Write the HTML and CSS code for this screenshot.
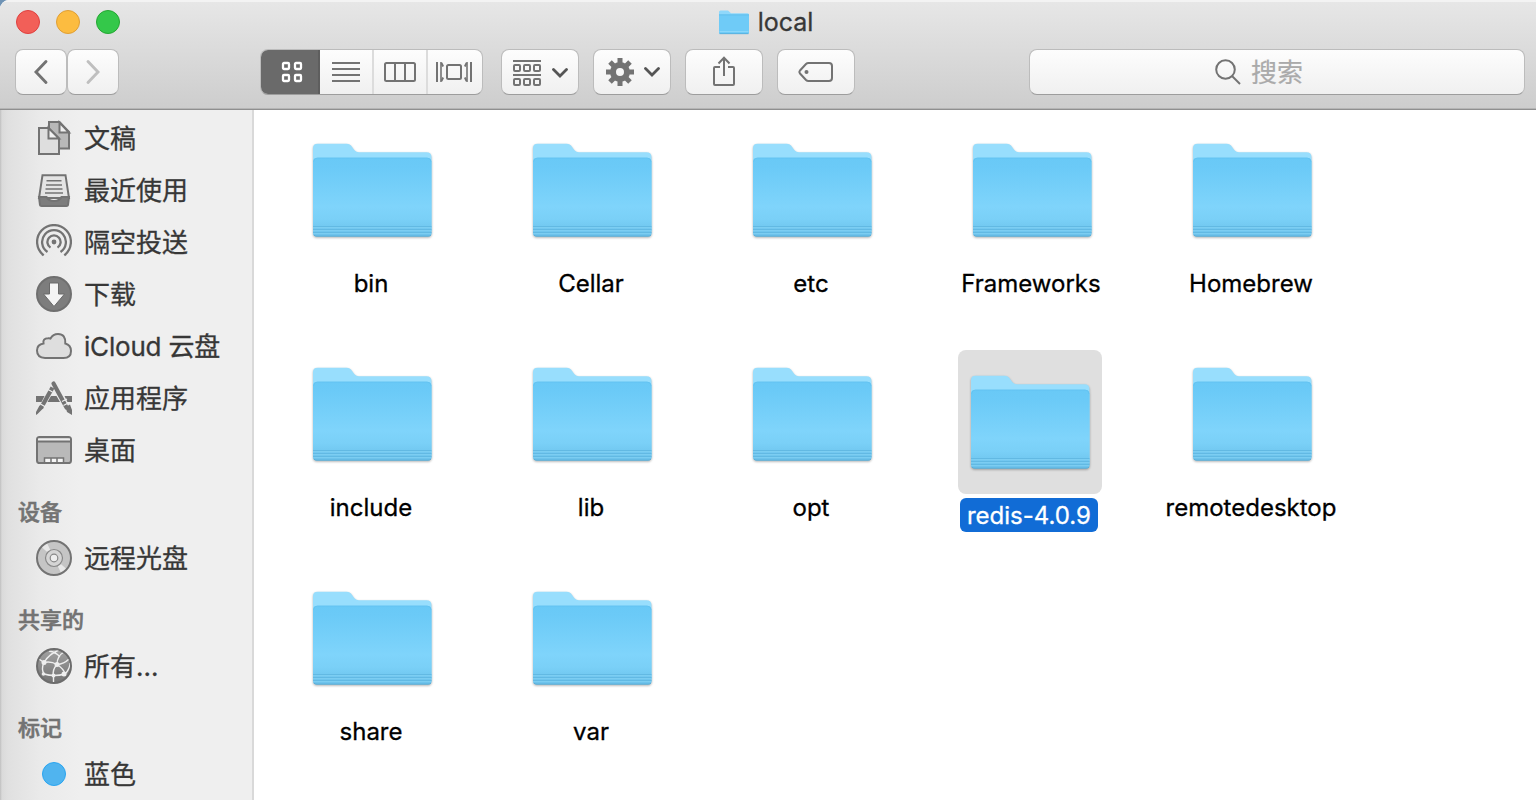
FILE: index.html
```
<!DOCTYPE html>
<html lang="zh-CN">
<head>
<meta charset="utf-8">
<title>local</title>
<link rel="stylesheet" href="styles.css">
</head>
<body>
<svg class="defs" width="0" height="0">
  <defs>
    <linearGradient id="front" x1="0" y1="0" x2="0" y2="1">
      <stop offset="0" stop-color="#69c9f6"/><stop offset=".12" stop-color="#6bcaf7"/><stop offset=".62" stop-color="#7fd4fb"/><stop offset=".78" stop-color="#7ad0f7"/><stop offset="1" stop-color="#68bfe9"/>
    </linearGradient>
    <linearGradient id="globe" x1="0" y1="0" x2="0" y2="1">
      <stop offset="0" stop-color="#a2a2a2"/><stop offset="1" stop-color="#747474"/>
    </linearGradient>
    <symbol id="folder" viewBox="0 0 119 95">
      <path d="M0 88V5Q0 .7 4.500 .7H34Q36.500 .7 38 2.600L41.500 7.200Q43.300 9.300 46 9.300H113.500Q118.500 9.300 118.500 14V88Z" fill="#98defd"/>
      <path d="M0 90V19Q0 14.700 4.500 14.700H114Q118.500 14.700 118.500 19V90Q118.500 93.500 115 93.500H3.500Q0 93.500 0 90Z" fill="url(#front)"/>
      <path d="M.5 19Q.5 15 4.500 15H114Q118 15 118 19" fill="none" stroke="#5fc0ee" stroke-opacity=".6"/>
      <path d="M0 83.500H118.500M0 86.500H118.500M0 89.500H118.500" stroke="#62b9e3" stroke-width="1"/>
      <path d="M0 84.700H118.500M0 87.700H118.500M0 90.700H118.500" stroke="#7fcff3" stroke-width="1"/>
      <path d="M1 92.200Q2 93.200 4 93.200H115Q117 93.200 118 92.200" fill="none" stroke="#57a9d2" stroke-width=".8"/>
    </symbol>
    <symbol id="chevron" viewBox="0 0 16 10"><path d="M1.500 1.500L8 8L14.500 1.500" fill="none" stroke="#555" stroke-width="2.800" stroke-linecap="round"/></symbol>
  </defs>
</svg>
<div class="window">
  <header class="chrome">
    <div class="titlebar">
      <div class="lights"><span class="light close"></span><span class="light minimize"></span><span class="light maximize"></span></div>
      <div class="title"><svg class="title-folder" viewBox="0 0 30 25"><path d="M0 22V2Q0 .5 1.500 .5H9L12 3.200H28.500Q30 3.200 30 5V22Z" fill="#8fd8fb"/><path d="M0 4.800H30V22.500Q30 24 28.500 24H1.500Q0 24 0 22.500Z" fill="#6fcbf7"/><path d="M0 4.800H30" stroke="#5abbe9" stroke-width=".8"/><path d="M.5 21.500H29.500" stroke="#8bd7fa"/><path d="M.5 23.700H29.500" stroke="#53aad6" stroke-width=".8"/></svg><span>local</span></div>
    </div>
    <div class="toolbar">
      <div class="nav">
        <button class="btn nav-btn"><svg width="16" height="26" viewBox="0 0 16 26"><path d="M13 2.500L3 13L13 23.500" fill="none" stroke="#737373" stroke-width="2.900" stroke-linecap="round"/></svg></button>
        <button class="btn nav-btn"><svg width="16" height="26" viewBox="0 0 16 26"><path d="M3 2.500L13 13L3 23.500" fill="none" stroke="#bfbfbf" stroke-width="2.900" stroke-linecap="round"/></svg></button>
      </div>
      <div class="btn segmented">
        <div class="segment active"><svg width="22" height="22" viewBox="0 0 22 22" fill="none" stroke="#fff" stroke-width="2.300"><rect x="2" y="2" width="6" height="6" rx="1"/><rect x="14" y="2" width="6" height="6" rx="1"/><rect x="2" y="14" width="6" height="6" rx="1"/><rect x="14" y="14" width="6" height="6" rx="1"/></svg></div>
        <div class="segment"><svg width="28" height="20" viewBox="0 0 28 20"><path d="M0 1H28M0 7H28M0 13H28M0 19H28" stroke="#737373" stroke-width="2"/></svg></div>
        <div class="segment"><svg width="32" height="20" viewBox="0 0 32 20" fill="none" stroke="#737373" stroke-width="2"><rect x="1" y="1" width="30" height="18" rx="1.500"/><path d="M11 1V19M21 1V19"/></svg></div>
        <div class="segment last"><svg width="36" height="20" viewBox="0 0 36 20" fill="none" stroke="#737373" stroke-width="2"><rect x="11" y="3" width="14" height="14" rx="1.500"/><path d="M1 0V20M35 0V20"/><path d="M5 0V20M31 0V20" stroke-width="1.600"/><path d="M5.500 1L7.200 4.500M5.500 19L7.200 15.500M30.500 1L28.800 4.500M30.500 19L28.800 15.500" stroke-width="1.800"/></svg></div>
      </div>
      <div class="actions">
        <button class="btn action menu"><svg width="28" height="26" viewBox="0 0 28 26" fill="none" stroke="#737373" stroke-width="2"><path d="M0 1H28M0 15H28"/><rect x="1" y="5" width="6" height="6" rx="1"/><rect x="11" y="5" width="6" height="6" rx="1"/><rect x="21" y="5" width="6" height="6" rx="1"/><rect x="1" y="19" width="6" height="6" rx="1"/><rect x="11" y="19" width="6" height="6" rx="1"/><rect x="21" y="19" width="6" height="6" rx="1"/></svg><svg class="chevron"><use href="#chevron"/></svg></button>
        <button class="btn action menu gear"><svg width="28" height="28" viewBox="-14 -14 28 28"><circle r="7" fill="none" stroke="#737373" stroke-width="6"/><g stroke="#737373" stroke-width="5"><path d="M0 -9V-14M0 9V14M-9 0H-14M9 0H14"/><path d="M-6.500 -6.500L-10 -10M6.500 6.500L10 10M-6.500 6.500L-10 10M6.500 -6.500L10 -10"/></g></svg><svg class="chevron"><use href="#chevron"/></svg></button>
        <button class="btn action share"><svg width="24" height="30" viewBox="0 0 24 30" fill="none" stroke="#737373" stroke-width="2"><path d="M8 11H3Q2 11 2 12V28Q2 29 3 29H21Q22 29 22 28V12Q22 11 21 11H16M12 20V2M6.500 7.500L12 1.800L17.500 7.500"/></svg></button>
        <button class="btn action"><svg width="36" height="22" viewBox="0 0 36 22"><path d="M10.500 2H31Q34 2 34 5V17Q34 20 31 20H10.500Q9 20 8 19L2 12.500Q.8 11 2 9.500L8 3Q9 2 10.500 2Z" fill="none" stroke="#737373" stroke-width="2"/><circle cx="8.500" cy="11" r="2" fill="#737373"/></svg></button>
      </div>
      <div class="btn search"><svg width="26" height="26" viewBox="0 0 26 26" fill="none" stroke="#737373" stroke-width="2"><circle cx="10.500" cy="10.500" r="9.300"/><path d="M17 17L25 25"/></svg><span>搜索</span></div>
    </div>
  </header>
  <div class="content">
    <nav class="sidebar">
      <div class="row"><svg class="icon" viewBox="0 0 36 36" fill="#b8b8b8" stroke="#737373" stroke-width="2"><path d="M13 2H23.500L33 12V28.500H13Z"/><path d="M23.500 2.500V12.500H33Z" fill="#efefef"/><path d="M3 8H12.500L23 18.500V34H3Z" fill="#dedede"/><path d="M12.500 8V18.500H23Z" fill="#f1f1f1"/></svg><span>文稿</span></div>
      <div class="row"><svg class="icon" viewBox="0 0 36 36" stroke="#737373" stroke-width="2"><path d="M6.500 3.200H29.500L33 26H3Z" fill="#e4e4e4"/><path d="M10.500 8.700H25.500M10 13H26M9.500 17H26.500M9 21H27" stroke-width="1.600"/><path d="M3 25H10.500Q12.500 29 18 29T25.500 25H33L32 33Q31.800 34 30.500 34H5.500Q4.200 34 4 33Z" fill="#7d7d7d"/></svg><span>最近使用</span></div>
      <div class="row"><svg class="icon" viewBox="0 0 36 36" fill="none" stroke="#737373" stroke-width="2.300"><circle cx="18" cy="18" r="2.400" fill="#737373" stroke="none"/><path d="M14.500 23.600A6.600 6.600 0 1 1 21.500 23.600M11.500 28A11.900 11.900 0 1 1 24.500 28M7.700 31.400A16.900 16.900 0 1 1 28.300 31.400"/></svg><span>隔空投送</span></div>
      <div class="row"><svg class="icon" viewBox="0 0 36 36"><circle cx="18" cy="18" r="17" fill="#7d7d7d" stroke="#6f6f6f" stroke-width="2"/><path d="M13.500 7H22.500V18H28.500L18 30.500L7.500 18H13.500Z" fill="#f4f4f4" stroke="#6a6a6a" stroke-width="1"/></svg><span>下载</span></div>
      <div class="row"><svg class="icon" viewBox="0 0 36 36"><path d="M9 30Q1 29.500 1 22.500Q1 16.500 7.500 15.500Q6.500 10.500 12 10.200Q13.500 10 14.500 10.500Q17 6 22 6Q29.800 6 29.300 15.500Q35 17 35 23Q35 30 27.500 30Z" fill="#dedede" stroke="#737373" stroke-width="2"/></svg><span class="latin">iCloud 云盘</span></div>
      <div class="row"><svg class="icon" viewBox="0 1 36 36"><path d="M0 17H8.500L5.500 23H0ZM15 17H20.500L24 23H11.500ZM28.500 17H36V23H31.500Z" fill="#737373"/><g fill="none" stroke="#737373" stroke-width="4.200"><path d="M17.500 4.500L30.500 28.500" stroke-linecap="round"/><path d="M16.500 8.500L5 29"/></g><path d="M12 10.500L16.500 13M4.500 25L9.500 28M26 22.500L31 20M27.500 26.500L33 23.500" stroke="#efefef" stroke-width="1.200"/><path d="M3.500 26.500L7.500 29L1.500 35L0 36V33ZM29.500 28L34 25.500L36 31V36L31 33Z" fill="#737373"/></svg><span>应用程序</span></div>
      <div class="row"><svg class="icon" viewBox="0 0 36 36" stroke="#737373" stroke-width="2"><rect x="1" y="5" width="34" height="26" rx="2.500" fill="#b9b9b9"/><path d="M2 6.500H34V9H2Z" fill="#eee" stroke="none"/><path d="M1 9.500H35"/><path d="M8.500 31V26H27.500V31M15 26V31M21 26V31" fill="#f4f4f4" stroke-width="1.500"/><path d="M2 31H34"/></svg><span>桌面</span></div>
      <h2 class="section">设备</h2>
      <div class="row"><svg class="icon" viewBox="0 0 36 36"><circle cx="18" cy="18" r="17" fill="#c5c5c5"/><path d="M18 18L5.500 7L11 3ZM18 18L30.500 29L25 33Z" fill="#e8e8e8"/><circle cx="18" cy="18" r="17" fill="none" stroke="#737373" stroke-width="2"/><circle cx="18" cy="18" r="8.500" fill="#d5d5d5" stroke="#888" stroke-width="1.200"/><circle cx="18" cy="18" r="3.800" fill="#eee" stroke="#888" stroke-width="1.200"/></svg><span>远程光盘</span></div>
      <h2 class="section">共享的</h2>
      <div class="row"><svg class="icon" viewBox="0 0 36 36"><circle cx="18" cy="18" r="17" fill="url(#globe)"/><g fill="none" stroke="#eee" stroke-width="1.400"><path d="M3 11L8 14.500Q15 13 21 16.500Q28 21 29 26M8 14.500Q13 6 23 2M8 14.500Q5 21 8 26Q18 29 29 26M21 16.500Q21 8 28 4M21 16.500Q16 22 17.500 28V34M21 16.500Q28 16 33 11M29 26Q34 21 34 15M13 3Q20 4 24 9"/></g><g fill="#eee"><circle cx="8" cy="14.500" r="2.500"/><circle cx="21" cy="16.500" r="2.500"/><circle cx="17.500" cy="27.500" r="2"/><circle cx="28" cy="26" r="2.500"/><circle cx="7.500" cy="26" r="1.800"/></g><circle cx="18" cy="18" r="17" fill="none" stroke="#6c6c6c" stroke-width="2"/></svg><span>所有...</span></div>
      <h2 class="section">标记</h2>
      <div class="row"><span class="tag"></span><span>蓝色</span></div>
    </nav>
    <main class="grid">
      <div class="item"><div class="thumb"><svg class="folder"><use href="#folder"/></svg></div><span class="label">bin</span></div>
      <div class="item"><div class="thumb"><svg class="folder"><use href="#folder"/></svg></div><span class="label">Cellar</span></div>
      <div class="item"><div class="thumb"><svg class="folder"><use href="#folder"/></svg></div><span class="label">etc</span></div>
      <div class="item"><div class="thumb"><svg class="folder"><use href="#folder"/></svg></div><span class="label">Frameworks</span></div>
      <div class="item"><div class="thumb"><svg class="folder"><use href="#folder"/></svg></div><span class="label">Homebrew</span></div>
      <div class="item"><div class="thumb"><svg class="folder"><use href="#folder"/></svg></div><span class="label">include</span></div>
      <div class="item"><div class="thumb"><svg class="folder"><use href="#folder"/></svg></div><span class="label">lib</span></div>
      <div class="item"><div class="thumb"><svg class="folder"><use href="#folder"/></svg></div><span class="label">opt</span></div>
      <div class="item selected"><div class="thumb"><svg class="folder"><use href="#folder"/></svg></div><span class="label">redis-4.0.9</span></div>
      <div class="item"><div class="thumb"><svg class="folder"><use href="#folder"/></svg></div><span class="label">remotedesktop</span></div>
      <div class="item"><div class="thumb"><svg class="folder"><use href="#folder"/></svg></div><span class="label">share</span></div>
      <div class="item"><div class="thumb"><svg class="folder"><use href="#folder"/></svg></div><span class="label">var</span></div>
    </main>
  </div>
</div>
</body>
</html>
```
FILE: styles.css
```
* { box-sizing: border-box; }
body {
  margin: 0;
  background: #6f93b5;
  font-family: Inter, "Noto Sans CJK SC", sans-serif;
  overflow: hidden;
}
svg { display: block; flex: none; }
.defs { position: absolute; }
.window {
  height: 800px;
  display: flex;
  flex-direction: column;
  border-top-left-radius: 9px;
  overflow: hidden;
  background: #fff;
}
.chrome {
  height: 110px;
  flex: none;
  background: linear-gradient(#e7e7e7, #cdcdcd);
  border-bottom: 1px solid #8f8f8f;
  box-shadow: inset 0 2px 0 #f3f3f3, inset 0 -1px 0 #b5b5b5;
}
.titlebar {
  height: 49px;
  display: grid;
  grid-template-columns: 1fr auto 1fr;
  padding: 0 20px 0 16px;
}
.lights { display: flex; gap: 16px; padding-top: 10px; }
.light { width: 24px; height: 24px; border-radius: 50%; border: 1px solid; }
.close { background: #f25f58; border-color: #e0403f; }
.minimize { background: #fcbc40; border-color: #e09f34; }
.maximize { background: #34c84a; border-color: #24a732; }
.title {
  display: flex;
  gap: 9px;
  height: 44px;
  align-items: center;
  font-size: 25px;
  color: #373737;
  -webkit-text-stroke: .3px;
}
.title-folder { width: 30px; height: 25px; }
.toolbar { display: flex; height: 46px; padding: 0 11px 0 15px; }
.btn {
  height: 46px;
  padding: 0;
  border: 1px solid #bcbcbc;
  border-bottom-color: #9d9d9d;
  border-radius: 8px;
  background: linear-gradient(#fdfdfd, #f0f0f0);
  display: flex;
  align-items: center;
  justify-content: center;
}
.nav { display: flex; gap: 0; width: 245px; }
.nav-btn { width: 52px; }
.segmented { width: 223px; margin-right: 18px; overflow: hidden; align-items: stretch; justify-content: flex-start; }
.segment {
  width: 54px;
  display: flex;
  align-items: center;
  justify-content: center;
  border-right: 2px solid #dcdcdc;
}
.last { border: 0; flex: 1; padding-right: 2px; }
.active { width: 60px; margin: -1px 0 -1px -1px; padding-left: 5px; background: #6a6a6a; border-right-color: #5e5e5e; }
.actions { display: flex; gap: 14px; }
.action { width: 78px; }
.menu { gap: 11px; padding: 1px 0 0 1px; }
.gear { gap: 10px; padding: 0 0 0 2px; }
.share { padding-bottom: 3px; }
.chevron { width: 16px; height: 10px; }
.search {
  margin-left: auto;
  width: 496px;
  gap: 10px;
  font-size: 26px;
  color: #aaa;
  padding-right: 36px;
  -webkit-text-stroke: .2px;
}
.search span { padding-bottom: 3px; }
.content { flex: 1; display: flex; min-height: 0; }
.sidebar {
  width: 254px;
  flex: none;
  padding-top: 2px;
  border-right: 2px solid #d9d9d9;
  background: linear-gradient(90deg, #bfbfbf 0, #dadada 2px, #e0e0e0 8px, #eaeaea 40px, #efefef 80px);
}
.row {
  height: 52px;
  padding-left: 36px;
  display: flex;
  align-items: center;
  gap: 12px;
  font-size: 26px;
  color: #373737;
  white-space: nowrap;
  -webkit-text-stroke: .3px;
}
.row span:last-child { padding-bottom: 3px; }
.row .latin { letter-spacing: -.2px; }
.icon { width: 36px; height: 36px; -webkit-text-stroke: 0; }
.section {
  height: 56px;
  margin: 0;
  padding: 16px 0 0 18px;
  line-height: 40px;
  font-size: 22px;
  font-weight: 500;
  color: #737373;
  -webkit-text-stroke: .6px;
}
.tag { width: 24px; height: 24px; margin: 0 6px; border-radius: 50%; background: #50b4ef; border: 1.500px solid #2aa5f0; }
.grid {
  padding: 8px 0 0 8px;
  display: grid;
  grid-template-columns: repeat(5, 220px);
  grid-auto-rows: 224px;
  align-content: start;
}
.item { display: flex; flex-direction: column; align-items: center; gap: 4px; }
.thumb { width: 144px; height: 144px; padding: 25px 0 0 13px; border-radius: 8px; }
.folder { width: 119px; height: 95px; filter: drop-shadow(0 1px 1px rgba(0, 0, 0, .3)); }
.label {
  height: 34px;
  margin-right: 2px;
  padding: 0 7px;
  border-radius: 6px;
  line-height: 35px;
  font-size: 24px;
  color: #000;
  white-space: nowrap;
  -webkit-text-stroke: .3px;
}
.selected { padding: 8px 4px 0 0; }
.selected .thumb { background: #dfdfdf; }
.selected .label { background: #116cd6; color: #fff; }
```
